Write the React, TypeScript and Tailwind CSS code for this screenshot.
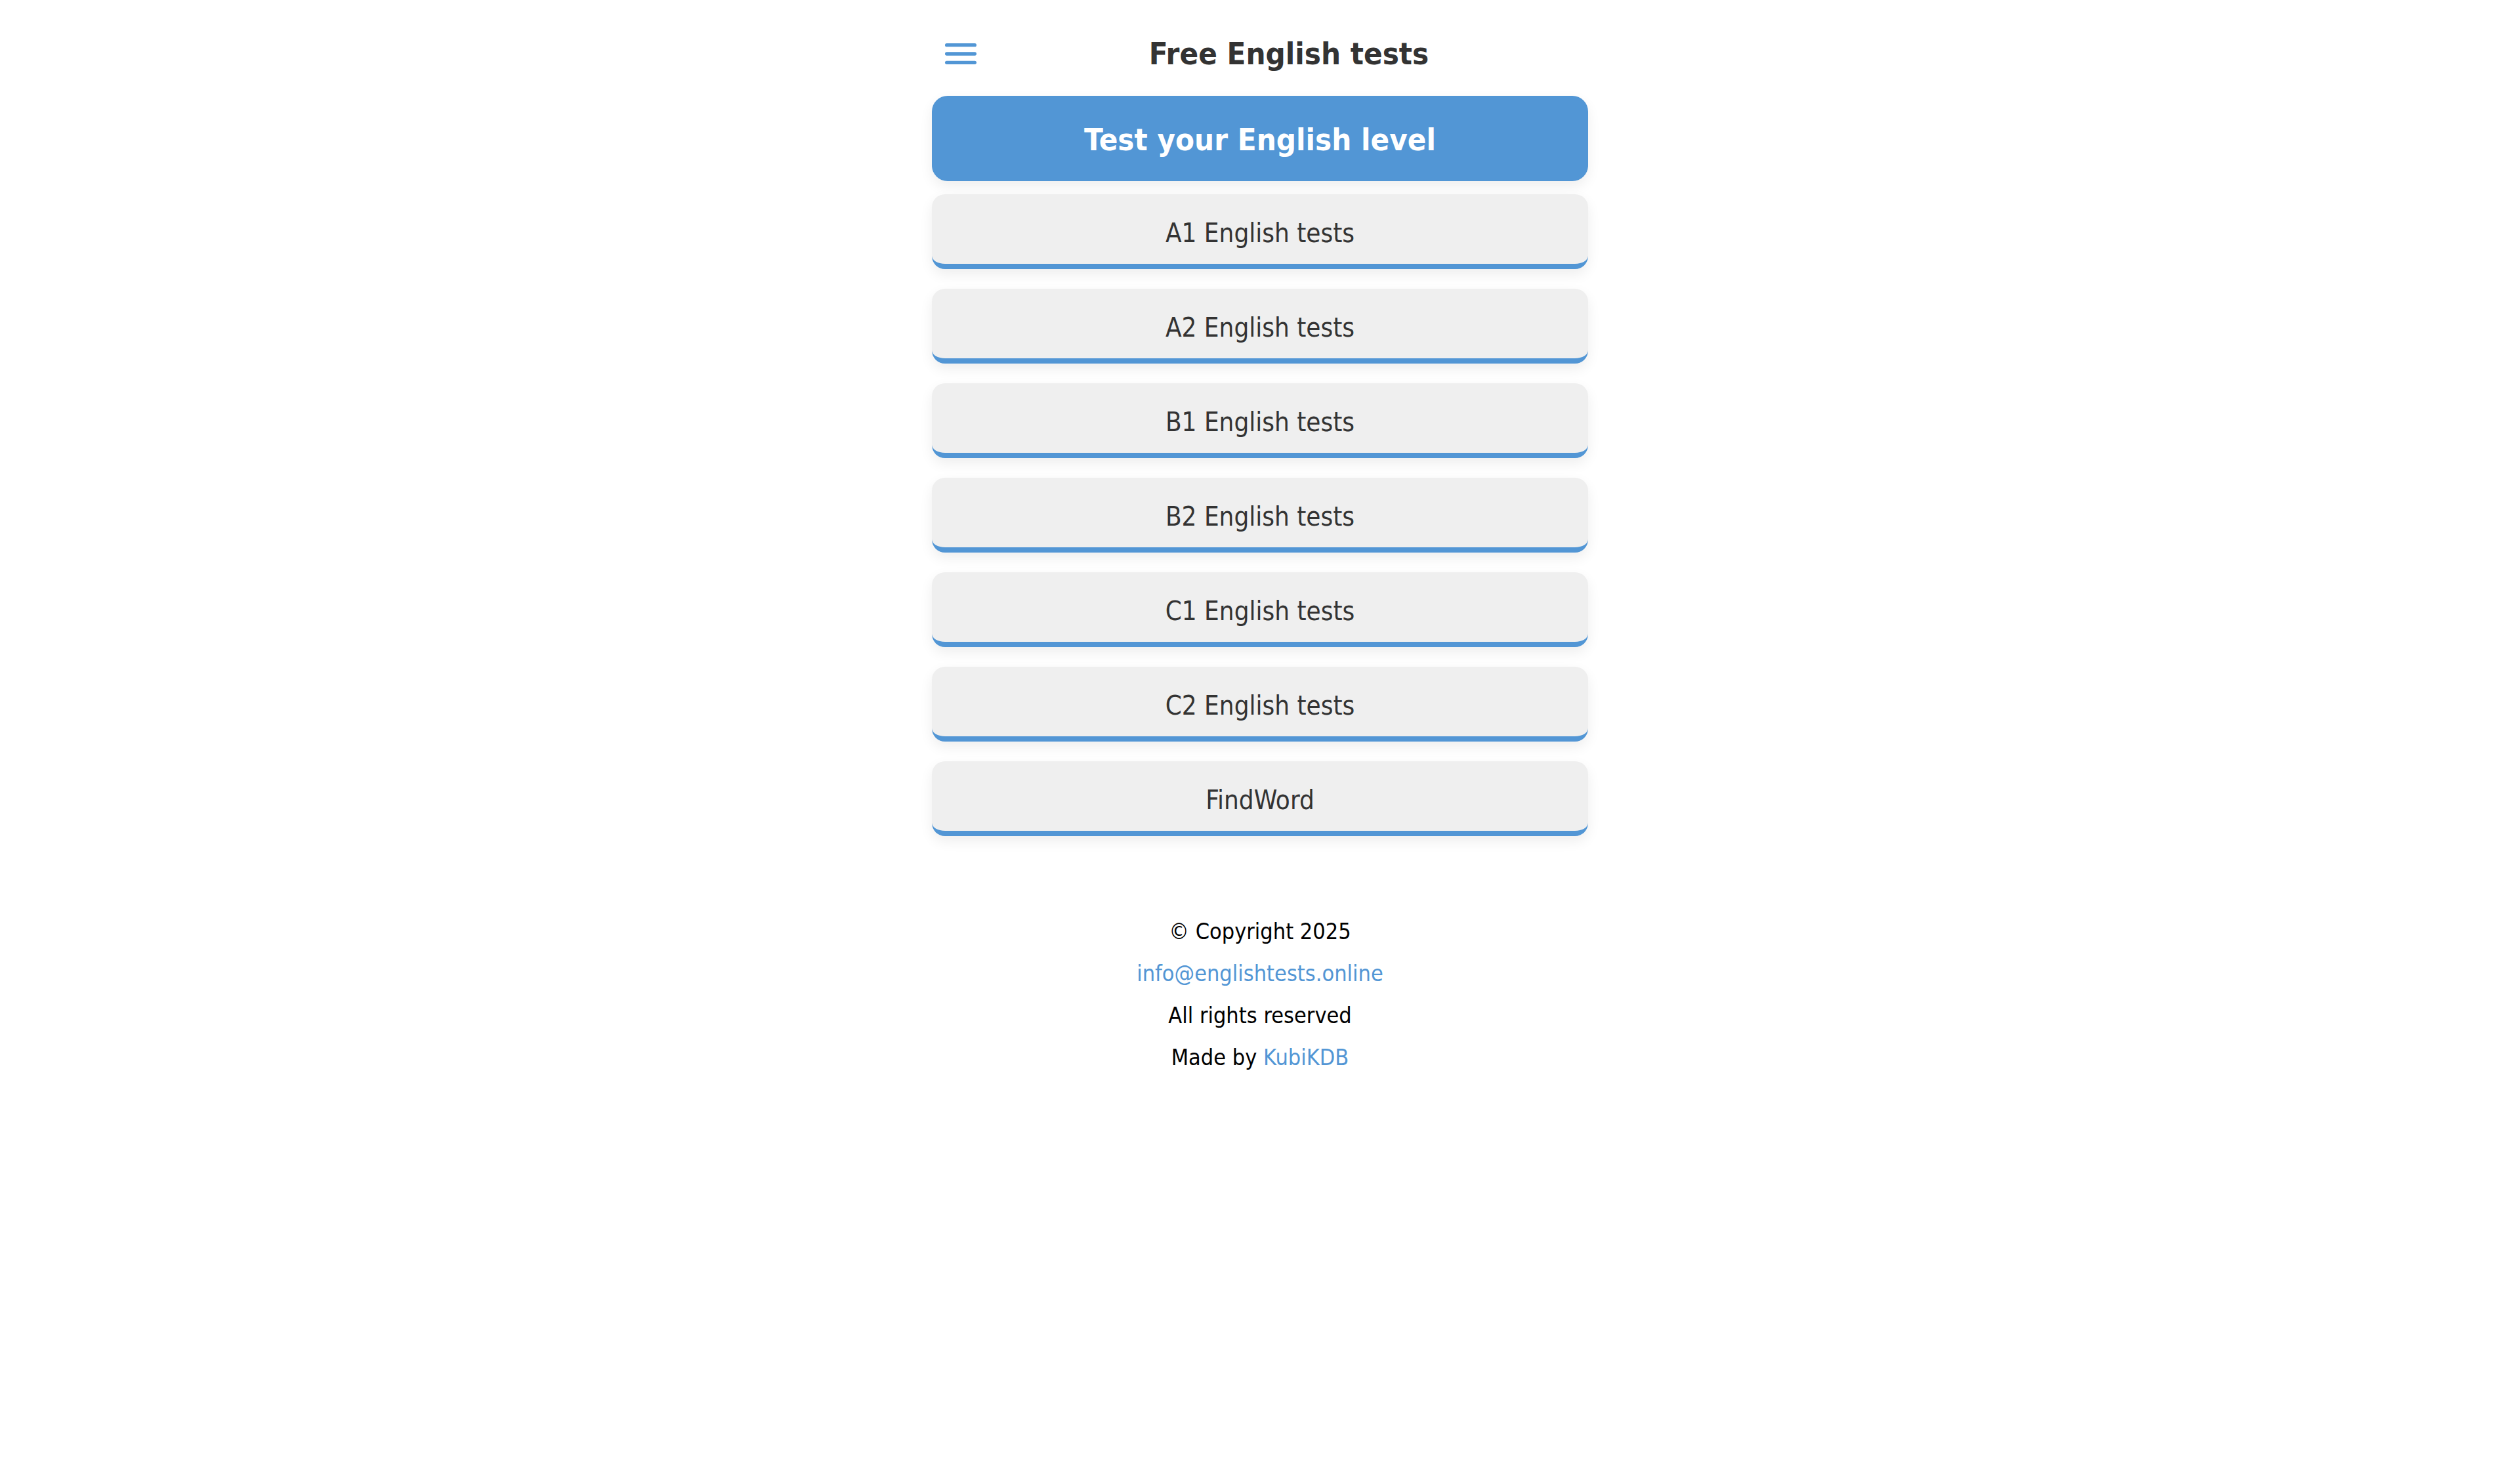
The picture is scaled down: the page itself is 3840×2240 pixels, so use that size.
import React from "react";

const items = [
  "A1 English tests",
  "A2 English tests",
  "B1 English tests",
  "B2 English tests",
  "C1 English tests",
  "C2 English tests",
  "FindWord",
];

export default function App() {
  return (
    <div
      className="min-h-screen w-full bg-white [font-stretch:condensed]"
      style={{ fontFamily: '"DejaVu Sans Condensed", "DejaVu Sans", Tahoma, sans-serif' }}
    >
      <div className="mx-auto w-[1000px]">
        <header className="mt-8 flex h-[100px] items-center">
          <button className="ml-3 flex h-16 w-16 items-center justify-center text-[#5296d5]">
            <svg width="64" height="64" viewBox="0 0 24 24" fill="currentColor">
              <rect x="3" y="6" width="18" height="2" rx="1" />
              <rect x="3" y="11" width="18" height="2" rx="1" />
              <rect x="3" y="16" width="18" height="2" rx="1" />
            </svg>
          </button>
          <h1 className="flex-1 pl-3 text-center text-[47px] font-bold text-[#333333]">
            Free English tests
          </h1>
        </header>

        <div className="mt-[14px] flex h-[130px] items-center justify-center rounded-[24px] bg-[#5296d5] pt-1 shadow-[0_8px_20px_rgba(0,0,0,0.07)]">
          <span className="text-[47px] font-bold text-white">Test your English level</span>
        </div>

        <nav className="mt-5 flex flex-col gap-[30px]">
          {items.map((t) => (
            <a
              key={t}
              href="#"
              className="flex h-[114px] items-center justify-center rounded-[20px] border-b-8 border-[#5296d5] bg-[#efefef] pt-[12px] text-[40px] text-[#333333] shadow-[0_8px_20px_rgba(0,0,0,0.07)]"
            >
              {t}
            </a>
          ))}
        </nav>

        <footer className="mt-[113px] flex flex-col items-center text-[34px] leading-[64px] text-black">
          <p>© Copyright 2025</p>
          <a href="#" className="text-[#5296d5]">info@englishtests.online</a>
          <p>All rights reserved</p>
          <p>
            Made by <a href="#" className="text-[#5296d5]">KubiKDB</a>
          </p>
        </footer>
      </div>
    </div>
  );
}
